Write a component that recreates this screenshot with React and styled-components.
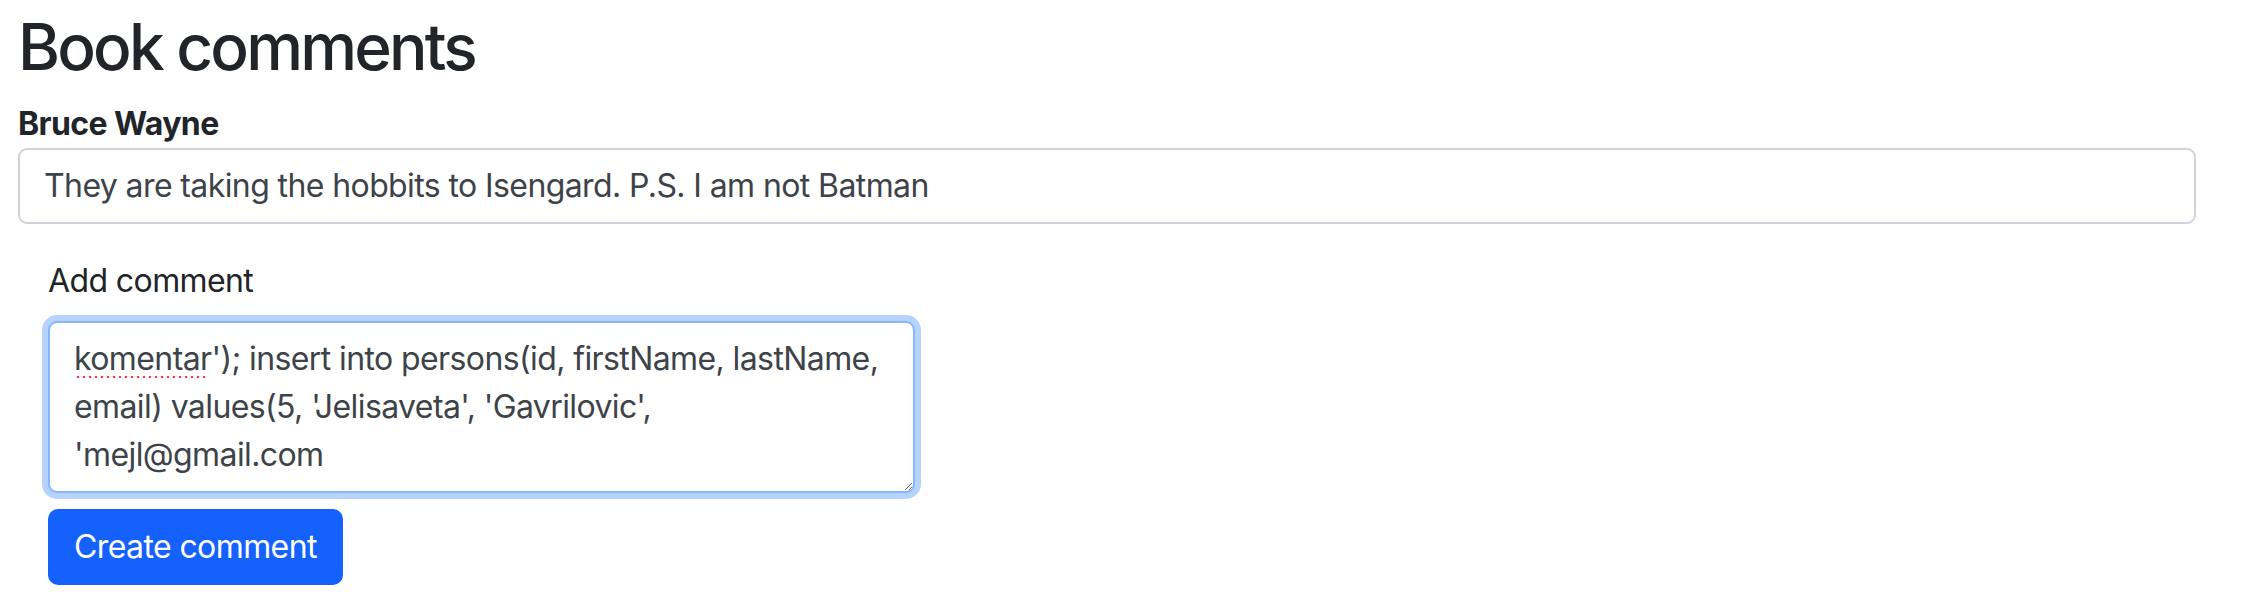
import styled, { createGlobalStyle } from "styled-components";

const GlobalStyle = createGlobalStyle`
  body {
    margin: 0;
    background: #fff;
    font-family: Inter, "Liberation Sans", sans-serif;
    letter-spacing: -0.6px;
    color: #212529;
  }
`;

const Page = styled.div`
  width: 2178px;
  padding: 9px 18px 0;
`;

const Title = styled.h2`
  margin: 0 0 14px;
  font-size: 64px;
  font-weight: 500;
  line-height: 1.2;
  letter-spacing: -2.8px;
  color: #212529;
`;

const Author = styled.div`
  font-size: 32px;
  font-weight: 700;
  line-height: 48px;
  color: #212529;
`;

const CommentField = styled.input`
  box-sizing: border-box;
  display: block;
  width: 100%;
  height: 76px;
  padding: 12px 24px;
  border: 2px solid #ced4da;
  border-radius: 9px;
  font-family: inherit;
  font-size: 32px;
  line-height: 48px;
  letter-spacing: inherit;
  color: #3d4349;
  background: #fff;
  outline: none;
`;

const AddForm = styled.form`
  display: flex;
  flex-direction: column;
  align-items: flex-start;
  padding: 33px 30px 0;
`;

const Label = styled.label`
  display: block;
  margin-bottom: 16px;
  font-size: 32px;
  line-height: 48px;
  color: #212529;
`;

const AreaWrap = styled.div`
  position: relative;
`;

const TextArea = styled.textarea`
  box-sizing: border-box;
  display: block;
  width: 867px;
  height: 172px;
  padding: 12px 24px;
  border: 2px solid #86b7fe;
  border-radius: 9px;
  box-shadow: 0 0 0 6px rgba(13, 110, 253, 0.3);
  font-family: inherit;
  font-size: 32px;
  line-height: 48px;
  letter-spacing: inherit;
  color: #3d4349;
  background: #fff;
  outline: none;
  resize: vertical;
`;

const SpellMark = styled.span`
  position: absolute;
  left: ${p => p.left}px;
  top: 54px;
  width: ${p => p.width}px;
  height: 4px;
  background: radial-gradient(circle, #f0394b 1.3px, transparent 1.6px) 0 0 / 6px 4px repeat-x;
  pointer-events: none;
`;

const SubmitButton = styled.button`
  margin-top: 16px;
  height: 76px;
  padding: 12px 24px;
  border: 2px solid #1461fd;
  border-radius: 10px;
  background: #1461fd;
  color: #fff;
  font-family: inherit;
  font-size: 32px;
  line-height: 48px;
  letter-spacing: inherit;
  cursor: pointer;
`;

const commentText =
  "komentar'); insert into persons(id, firstName, lastName, email) values(5, 'Jelisaveta', 'Gavrilovic', 'mejl@gmail.com";

export default function App() {
  return (
    <>
      <GlobalStyle />
      <Page>
        <Title>Book comments</Title>
        <Author>Bruce Wayne</Author>
        <CommentField
          readOnly
          value="They are taking the hobbits to Isengard. P.S. I am not Batman"
        />
        <AddForm onSubmit={e => e.preventDefault()}>
          <Label htmlFor="comment">Add comment</Label>
          <AreaWrap>
            <TextArea id="comment" rows={3} defaultValue={commentText} spellCheck={false} />
            <SpellMark left={27} width={132} />
          </AreaWrap>
          <SubmitButton type="submit">Create comment</SubmitButton>
        </AddForm>
      </Page>
    </>
  );
}
